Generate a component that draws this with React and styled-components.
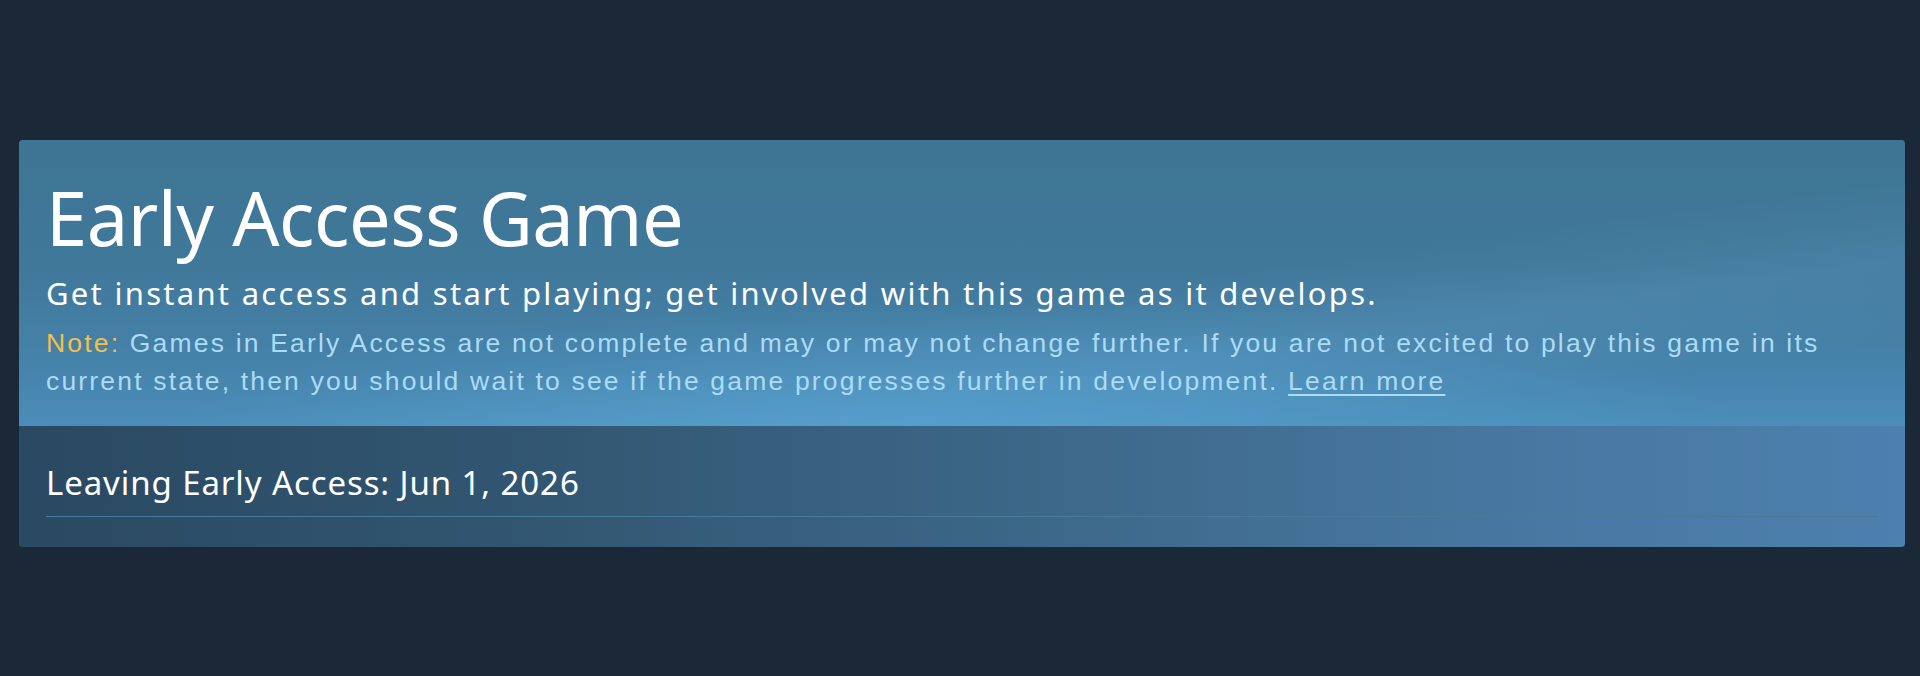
import React from "react";
import styled, { createGlobalStyle } from "styled-components";

const GlobalStyle = createGlobalStyle`
  html, body {
    margin: 0;
    padding: 0;
    background: #1b2838;
  }
  body {
    font-family: "Noto Sans", "Liberation Sans", sans-serif;
  }
`;

const Page = styled.div`
  width: 1920px;
  height: 676px;
  background: #1b2838;
  padding: 140px 15px 0 19px;
  box-sizing: border-box;
`;

const Panel = styled.section`
  border-radius: 4px;
  overflow: hidden;
  box-shadow: inset 1px 1px 0 rgba(120, 170, 210, 0.45);
`;

const Header = styled.div`
  padding: 41px 27px 26px 27px;
  background:
    radial-gradient(ellipse 60% 70% at 50% 105%, rgba(90, 170, 220, 0.55), rgba(90, 170, 220, 0) 70%),
    linear-gradient(172deg, rgba(255,255,255,0) 55%, rgba(130,190,230,0.12) 70%, rgba(255,255,255,0) 85%),
    linear-gradient(to bottom, #3e7594 0%, #40789a 45%, #4683ab 80%, #4b8db9 100%);
`;

const Title = styled.h1`
  margin: 0;
  font-family: "Noto Sans", sans-serif;
  font-weight: 400;
  font-size: 74px;
  line-height: 74px;
  color: #ffffff;
  letter-spacing: -0.5px;
`;

const Subtitle = styled.p`
  margin: 18px 0 0 0;
  font-family: "Noto Sans", sans-serif;
  font-size: 31px;
  line-height: 40px;
  letter-spacing: 2.28px;
  color: #ffffff;
`;

const Note = styled.p`
  margin: 12px 0 0 0;
  font-family: "Liberation Sans", Arial, sans-serif;
  font-size: 26.5px;
  line-height: 37.5px;
  letter-spacing: 2.18px;
  color: #acdbf5;
`;

const NoteLabel = styled.span`
  color: #f7bf47;
`;

const LearnMore = styled.a`
  color: #acdbf5;
  text-decoration: underline;
  text-underline-offset: 4px;
  text-decoration-thickness: 2px;
`;

const Footer = styled.div`
  padding: 35px 27px 30px 27px;
  background: linear-gradient(to right, #2a4962 0%, #315570 25%, #3d6889 55%, #4878a2 80%, #4d80ae 100%);
`;

const ReleaseDate = styled.div`
  font-family: "Noto Sans", sans-serif;
  font-size: 33px;
  line-height: 44px;
  letter-spacing: 0.9px;
  color: #ffffff;
  padding-bottom: 11px;
  border-bottom: 1px solid #4a7a9a;
`;

export default function App() {
  return (
    <>
      <GlobalStyle />
      <Page>
        <Panel>
          <Header>
            <Title>Early Access Game</Title>
            <Subtitle>
              Get instant access and start playing; get involved with this game as it develops.
            </Subtitle>
            <Note>
              <NoteLabel>Note:</NoteLabel> Games in Early Access are not complete and may or may
              not change further. If you are not excited to play this game in its current state,
              then you should wait to see if the game progresses further in development.{" "}
              <LearnMore href="#">Learn more</LearnMore>
            </Note>
          </Header>
          <Footer>
            <ReleaseDate>Leaving Early Access: Jun 1, 2026</ReleaseDate>
          </Footer>
        </Panel>
      </Page>
    </>
  );
}
